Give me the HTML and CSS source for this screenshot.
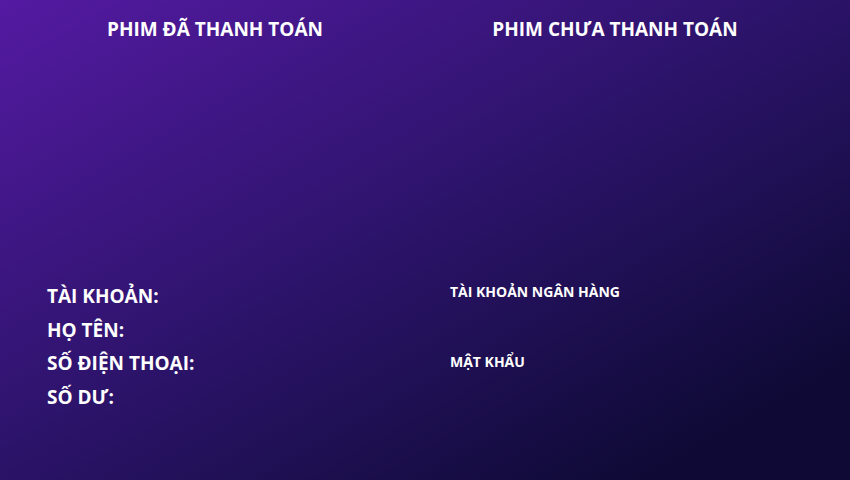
FILE: index.html
```html
<!DOCTYPE html>
<html lang="vi">
<head>
<meta charset="utf-8">
<title>Tài khoản</title>
<link rel="stylesheet" href="styles.css">
</head>
<body>
<div class="page">
  <section class="films">
    <div class="film-col">
      <h2 class="film-title">PHIM ĐÃ THANH TOÁN</h2>
      <div class="film-list"></div>
    </div>
    <div class="film-col">
      <h2 class="film-title">PHIM CHƯA THANH TOÁN</h2>
      <div class="film-list"></div>
    </div>
  </section>
  <section class="account">
    <div class="info">
      <div class="info-row">TÀI KHOẢN:</div>
      <div class="info-row">HỌ TÊN:</div>
      <div class="info-row">SỐ ĐIỆN THOẠI:</div>
      <div class="info-row">SỐ DƯ:</div>
    </div>
    <div class="bank">
      <div class="bank-label">TÀI KHOẢN NGÂN HÀNG</div>
      <div class="bank-label">MẬT KHẨU</div>
    </div>
  </section>
</div>
</body>
</html>
```
FILE: styles.css
```css
* { box-sizing: border-box; }
html, body { margin: 0; padding: 0; }
body {
  font-family: "Open Sans", "Noto Sans", sans-serif;
  color: #ffffff;
}
.page {
  width: 850px;
  height: 480px;
  background: linear-gradient(to bottom right, #541aa2 0%, #2a1367 50%, #0e0a35 88%, #0e0a35 100%);
  display: flex;
  flex-direction: column;
  overflow: hidden;
}
.films {
  display: grid;
  grid-template-columns: 400px 400px;
  padding: 16px 0 0 15px;
  height: 276px;
}
.film-title {
  margin: 0;
  text-align: center;
  font-size: 19px;
  font-weight: 700;
  line-height: 26px;
}
.account {
  display: grid;
  grid-template-columns: 403px 1fr;
  padding-left: 47px;
}
.info {
  display: flex;
  flex-direction: column;
  padding-top: 4px;
}
.info-row {
  font-size: 19px;
  font-weight: 700;
  line-height: 33.7px;
}
.bank {
  display: flex;
  flex-direction: column;
  gap: 50px;
  padding-top: 6px;
}
.bank-label {
  font-size: 14px;
  font-weight: 700;
  line-height: 20px;
}
```
